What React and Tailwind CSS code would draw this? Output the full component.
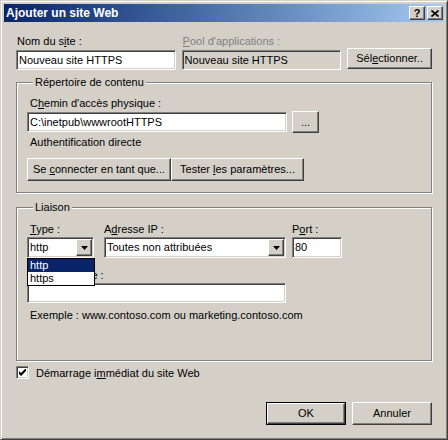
const raised =
  "bg-[#d4d0c8] border border-t-white border-l-white border-r-[#404040] border-b-[#404040] shadow-[inset_-1px_-1px_0_#808080]";
const sunken =
  "border border-t-[#808080] border-l-[#808080] border-r-white border-b-white shadow-[inset_1px_1px_0_#404040,inset_-1px_-1px_0_#d4d0c8]";
const etched = "border border-[#808080] shadow-[inset_1px_1px_0_#fff,1px_1px_0_#fff]";

const Label = ({ children, className = "" }) => (
  <div className={`h-[13px] leading-[13px] whitespace-nowrap ${className}`}>{children}</div>
);

const TextBox = ({ value = "", className = "", disabled = false }) => (
  <div
    className={`${sunken} ${disabled ? "bg-[#d4d0c8]" : "bg-white"} h-[20px] flex items-center pl-[2px] leading-[13px] whitespace-nowrap overflow-hidden ${className}`}
  >
    <span>{value}</span>
  </div>
);

// text wrapped in a span so the spaces around <u> survive the flex layout
const Button = ({ children, className = "" }) => (
  <div className={`${raised} flex items-center justify-center leading-[13px] whitespace-nowrap ${className}`}>
    <span>{children}</span>
  </div>
);

const Arrow = () => (
  <svg width="7" height="4" viewBox="0 0 7 4">
    <path d="M0 0h7L3.5 4z" fill="#000" />
  </svg>
);

const Select = ({ value, className = "" }) => (
  <div className={`${sunken} bg-white h-[21px] p-[1px] flex ${className}`}>
    <div className="flex-1 flex items-center pl-[1px] leading-[13px] whitespace-nowrap overflow-hidden">{value}</div>
    <div className={`${raised} w-[16px] flex items-center justify-center`}>
      <Arrow />
    </div>
  </div>
);

const Group = ({ title, children, className = "" }) => (
  <fieldset className={`${etched} px-[10px] ${className}`}>
    <legend className="ml-[6px] px-[2px] h-[13px] leading-[13px] bg-[#d4d0c8]">{title}</legend>
    {children}
  </fieldset>
);

export default function App() {
  return (
    <div className="w-[448px] h-[440px] bg-[#d4d0c8] border border-t-[#d4d0c8] border-l-[#d4d0c8] border-r-[#404040] border-b-[#404040] shadow-[inset_1px_1px_0_#fff,inset_-1px_-1px_0_#808080] p-[3px] flex flex-col text-[11px] text-black font-['Liberation_Sans',Arial,sans-serif]">
      {/* title bar */}
      <div className="h-[18px] bg-linear-to-r from-[#0a246a] to-[#a6caf0] flex items-center pl-[2px] pr-[1px]">
        <span className="flex-1 text-white font-bold text-[12px] leading-[14px]">Ajouter un site Web</span>
        <div className={`${raised} w-[16px] h-[14px] flex items-center justify-center font-bold text-[11px] leading-[11px]`}>
          ?
        </div>
        <div className={`${raised} w-[16px] h-[14px] ml-[2px] flex items-center justify-center`}>
          <svg width="8" height="7" viewBox="0 0 8 7">
            <path d="M0.5 0.5l7 6M7.5 0.5l-7 6" stroke="#000" strokeWidth="1.6" />
          </svg>
        </div>
      </div>

      <div className="px-[12px] flex flex-col flex-1">
        {/* site name row */}
        <div className="mt-[13px] flex items-end">
          <div className="w-[160px]">
            <Label className="pl-[1px]">
              Nom du s<u>i</u>te :
            </Label>
            <TextBox value="Nouveau site HTTPS" className="mt-[2px]" />
          </div>
          <div className="w-[160px] ml-[6px]">
            <Label className="pl-[1px] text-[#808080]">
              <u>P</u>ool d'applications :
            </Label>
            <TextBox value="Nouveau site HTTPS" className="mt-[2px]" disabled />
          </div>
          <Button className="w-[85px] h-[21px] ml-[6px] mb-[1px]">
            Sél<u>e</u>ctionner..
          </Button>
        </div>

        {/* content directory */}
        <Group title="Répertoire de contenu" className="mt-[6px] pb-[11px]">
          <Label className="mt-[8px] pl-[3px]">
            C<u>h</u>emin d'accès physique :
          </Label>
          <div className="mt-[1px] flex items-center">
            <TextBox value="C:\inetpub\wwwrootHTTPS" className="w-[260px]" />
            <Button className="w-[27px] h-[22px] ml-[5px]">...</Button>
          </div>
          <Label className="mt-[3px] pl-[3px]">Authentification directe</Label>
          <div className="mt-[9px] flex">
            <Button className="w-[144px] h-[23px]">
              Se <u>c</u>onnecter en tant que...
            </Button>
            <Button className="w-[133px] h-[23px]">
              Tester <u>l</u>es paramètres...
            </Button>
          </div>
        </Group>

        {/* binding */}
        <Group title="Liaison" className="mt-[8px] pb-[38px]">
          <div className="mt-[9px] flex">
            <div className="relative w-[67px]">
              <Label className="pl-[3px]">
                <u>T</u>ype :
              </Label>
              <Select value="http" className="mt-[1px]" />
              <div className="absolute left-0 top-[35px] w-[68px] border border-black bg-white z-10">
                <div className="h-[13px] leading-[13px] pl-[2px] bg-[#0a246a] text-white">http</div>
                <div className="h-[13px] leading-[13px] pl-[2px]">https</div>
              </div>
            </div>
            <div className="w-[182px] ml-[10px]">
              <Label>
                A<u>d</u>resse IP :
              </Label>
              <Select value="Toutes non attribuées" className="mt-[1px]" />
            </div>
            <div className="w-[50px] ml-[6px]">
              <Label>
                P<u>o</u>rt :
              </Label>
              <TextBox value="80" className="mt-[1px] h-[21px]" />
            </div>
          </div>
          <Label className="mt-[11px] pl-[3px]">
            <u>N</u>om de l'hôte :
          </Label>
          <TextBox className="mt-[1px] w-[259px]" />
          <Label className="mt-[6px] pl-[3px]">Exemple : www.contoso.com ou marketing.contoso.com</Label>
        </Group>

        {/* start checkbox */}
        <div className="mt-[5px] flex items-start">
          <div className={`${sunken} bg-white w-[13px] h-[13px] flex items-center justify-center`}>
            <svg width="7" height="7" viewBox="0 0 7 7">
              <path d="M0 2v3l2 2l5-5V-1L2 4z" fill="#000" />
            </svg>
          </div>
          <Label className="ml-[7px] mt-[1px]">
            Démarrage i<u>m</u>médiat du site Web
          </Label>
        </div>

        {/* dialog buttons */}
        <div className="mt-[22px] flex justify-end">
          <div className="border border-black">
            <Button className="w-[78px] h-[21px]">OK</Button>
          </div>
          <Button className="w-[80px] h-[23px] ml-[6px]">Annuler</Button>
        </div>
      </div>
    </div>
  );
}
